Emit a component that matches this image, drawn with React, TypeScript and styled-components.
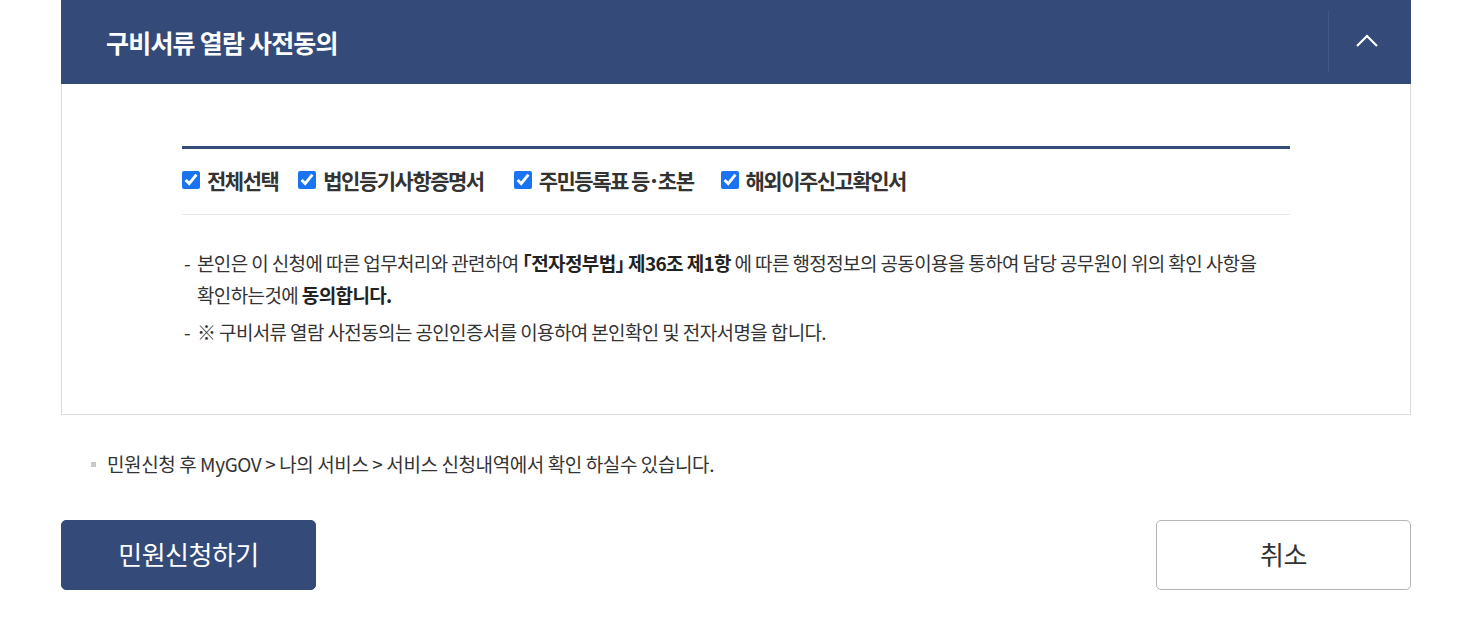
import React from 'react'
import styled, { createGlobalStyle } from 'styled-components'

const GlobalStyle = createGlobalStyle`
  html, body {
    margin: 0;
    padding: 0;
    background: #fff;
    font-family: "Noto Sans CJK KR", "Noto Sans", sans-serif;
    color: #333;
  }
`

const Page = styled.div`
  width: 1350px;
  margin-left: 61px;
`

const Section = styled.section`
  display: flex;
  flex-direction: column;
`

const Header = styled.div`
  display: flex;
  align-items: stretch;
  height: 84px;
  background: #344b79;
`

const Title = styled.h2`
  flex: 1;
  margin: 0;
  padding-left: 45px;
  display: flex;
  align-items: center;
  font-size: 25px;
  font-weight: 700;
  letter-spacing: -0.8px;
  color: #fff;
`

const ToggleButton = styled.button`
  width: 83px;
  margin: 11px 0 12px;
  border: 0;
  border-left: 1px solid rgba(255, 255, 255, 0.08);
  background: transparent;
  display: flex;
  align-items: center;
  justify-content: center;
  padding: 0 6px 2px 0;
  cursor: pointer;
`

const Body = styled.div`
  border: 1px solid #dcdcdc;
  border-top: 0;
  padding: 62px 120px 66px;
`

const CheckRow = styled.div`
  display: flex;
  align-items: center;
  gap: 20px;
  border-top: 3px solid #344b79;
  border-bottom: 1px solid #e8e8e8;
  padding: 19px 0 22px;
`

const CheckLabel = styled.label<{ $gap?: number }>`
  display: flex;
  align-items: center;
  gap: 7px;
  margin-right: ${p => p.$gap ?? 0}px;
  font-size: 21px;
  font-weight: 700;
  letter-spacing: -1.5px;
  color: #333;
  line-height: 24px;
  cursor: pointer;

  input {
    width: 18px;
    height: 18px;
    margin: 0;
    accent-color: #1a73f0;
  }
`

const InfoList = styled.ul`
  list-style: none;
  margin: 32px 0 0;
  padding: 0 0 0 2px;
  display: flex;
  flex-direction: column;
  gap: 5px;
`

const InfoItem = styled.li`
  position: relative;
  padding-left: 13px;
  font-size: 19px;
  line-height: 32px;
  letter-spacing: -0.62px;
  color: #333;

  &::before {
    content: '-';
    position: absolute;
    left: 0;
    top: 0;
  }

  b {
    font-weight: 700;
    color: #222;
  }
`

const Note = styled.p`
  margin: 37px 0 0;
  padding-left: 46px;
  position: relative;
  font-size: 19px;
  line-height: 24px;
  letter-spacing: -0.4px;
  color: #333;

  &::before {
    content: '';
    position: absolute;
    left: 30px;
    top: 10px;
    width: 5px;
    height: 5px;
    background: #c8c8c8;
  }
`

const Actions = styled.div`
  display: flex;
  justify-content: space-between;
  margin-top: 44px;
`

const Button = styled.button<{ $primary?: boolean }>`
  width: 255px;
  height: 70px;
  padding: 0 0 4px;
  border-radius: 5px;
  font-family: inherit;
  font-size: 26px;
  letter-spacing: -0.5px;
  cursor: pointer;
  border: 1px solid ${p => (p.$primary ? '#344b79' : '#b5b5b5')};
  background: ${p => (p.$primary ? '#344b79' : '#fff')};
  color: ${p => (p.$primary ? '#fff' : '#333')};
`

const Chevron = () => (
  <svg width="24" height="14" viewBox="0 0 24 14" fill="none">
    <path d="M2 12 L12 2 L22 12" stroke="#fff" strokeWidth="2.2" />
  </svg>
)

const checks = [
  { label: '전체선택', gap: 0 },
  { label: '법인등기사항증명서', gap: 10 },
  { label: '주민등록표 등･초본', gap: 7 },
  { label: '해외이주신고확인서', gap: 0 },
]

export default function App() {
  return (
    <Page>
      <GlobalStyle />
      <Section>
        <Header>
          <Title>구비서류 열람 사전동의</Title>
          <ToggleButton aria-label="접기">
            <Chevron />
          </ToggleButton>
        </Header>
        <Body>
          <CheckRow>
            {checks.map(c => (
              <CheckLabel key={c.label} $gap={c.gap}>
                <input type="checkbox" defaultChecked />
                {c.label}
              </CheckLabel>
            ))}
          </CheckRow>
          <InfoList>
            <InfoItem>
              본인은 이 신청에 따른 업무처리와 관련하여 <b>｢전자정부법｣ 제36조 제1항</b> 에 따른 행정정보의 공동이용을 통하여 담당 공무원이 위의 확인 사항을
              <br />
              확인하는것에 <b>동의합니다.</b>
            </InfoItem>
            <InfoItem>※ 구비서류 열람 사전동의는 공인인증서를 이용하여 본인확인 및 전자서명을 합니다.</InfoItem>
          </InfoList>
        </Body>
      </Section>
      <Note>민원신청 후 MyGOV &gt; 나의 서비스 &gt; 서비스 신청내역에서 확인 하실수 있습니다.</Note>
      <Actions>
        <Button $primary>민원신청하기</Button>
        <Button>취소</Button>
      </Actions>
    </Page>
  )
}
